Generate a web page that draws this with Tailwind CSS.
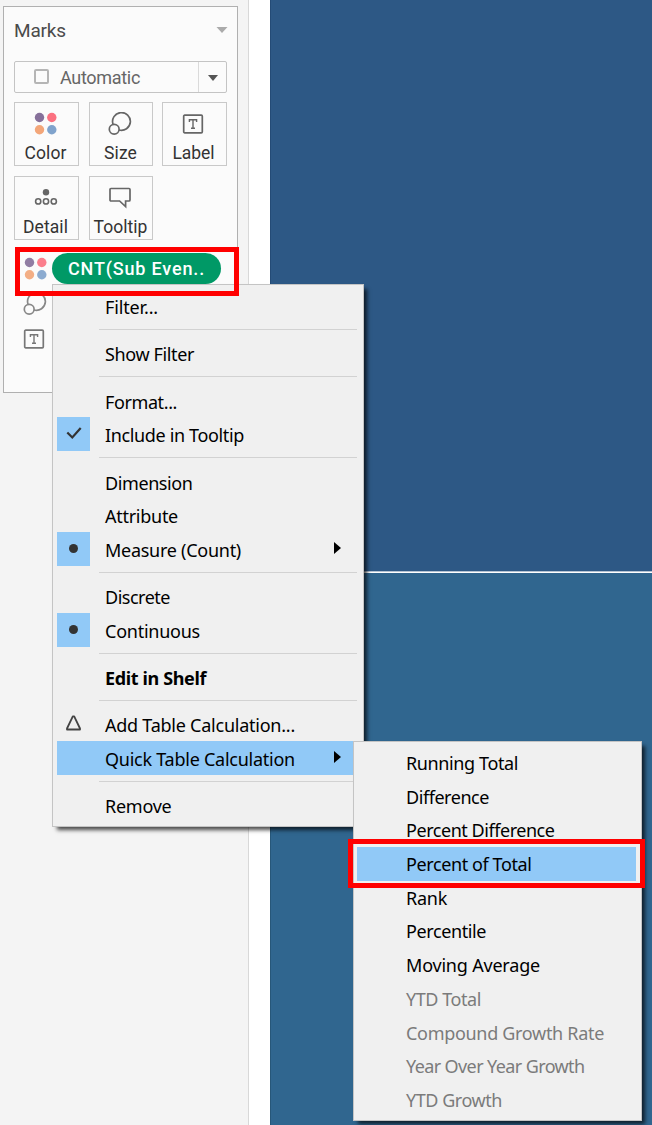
<!DOCTYPE html>
<html lang="en">
<head>
<meta charset="utf-8">
<title>Marks card</title>
<script src="https://cdn.jsdelivr.net/npm/@tailwindcss/browser@4"></script>
</head>
<body class="relative h-[1125px] w-[652px] overflow-hidden bg-white font-['Noto_Sans',sans-serif]">
<svg class="hidden">
  <symbol id="dots" viewBox="0 0 24 24"><circle cx="5.5" cy="5.5" r="4.7" fill="#86709a"/><circle cx="17.8" cy="5.5" r="4.7" fill="#fb7180"/><circle cx="5.5" cy="17.8" r="4.7" fill="#f3a679"/><circle cx="17.8" cy="17.8" r="4.7" fill="#80a3cc"/></symbol>
  <symbol id="size" viewBox="0 0 24 24"><path d="M5 12.2A8.9 8.9 0 1 1 11 18" fill="none" stroke="currentColor" stroke-width="1.700"/><circle cx="6.200" cy="17.2" r="4.900" fill="none" stroke="currentColor" stroke-width="1.700"/></symbol>
  <symbol id="label" viewBox="0 0 22 20"><rect x="1.7" y="1.2" width="18.6" height="17.600" rx="1" fill="none" stroke="currentColor" stroke-width="1.7"/><path d="M7.400 8V5.800H14.600V8M11 5.800V14M9 14.200H13" fill="none" stroke="currentColor" stroke-width="1.4"/></symbol>
</svg>

<main class="flex h-full">
  <aside class="h-full w-[249px] shrink-0 border-r border-[#d8d8d8] bg-[#f4f4f4] pt-1.5 pl-[3px] font-[Roboto,sans-serif] text-[#4b4b4b]">
    <section class="h-[387px] w-[235px] border border-[#b0b0b0] bg-[#fbfbfb] px-[10px]">
      <header class="flex h-[47px] items-center justify-between">
        <h1 class="text-[19px] leading-6 whitespace-nowrap"><span data-w="52">Marks</span></h1>
        <svg class="mb-0.5 -mr-px h-1.5 w-3" viewBox="0 0 12 6"><path d="M.5 0h11L6 6z" fill="#ababab"/></svg>
      </header>
      <div class="mt-[7px] flex h-8 w-[213px] items-stretch rounded-[2px] border border-[#c4c4c4]">
        <div class="flex flex-1 items-center pl-[19px]">
          <span class="mb-px size-[15px] rounded-[2px] border-2 border-[#b5b5b5]"></span>
          <span class="mt-0.5 ml-[11px] text-[18px] leading-6 whitespace-nowrap text-[#666]"><span data-w="80">Automatic</span></span>
        </div>
        <div class="flex w-7 items-center justify-center border-l border-[#dadada]"><svg class="mt-0.5 h-1.5 w-2.5" viewBox="0 0 10 6"><path d="M0 0h10L5 6z" fill="#555"/></svg></div>
      </div>
      <div class="mt-[9px] grid grid-cols-[65px_64px_65px] gap-x-[9.5px] gap-y-[10px] text-center text-[17.500px] leading-5 text-[#333]">
        <div class="flex h-16 flex-col items-center border border-[#c9c9c9] pt-[9px]"><svg class="h-6 w-6 -ml-px text-[#666]"><use href="#dots"/></svg><span class="mt-[7px] -ml-0.5 whitespace-nowrap" data-w="42">Color</span></div>
        <div class="flex h-16 flex-col items-center border border-[#c9c9c9] pt-[9px]"><svg class="h-6 w-6 -ml-px text-[#666]"><use href="#size"/></svg><span class="mt-[7px] whitespace-nowrap" data-w="33">Size</span></div>
        <div class="flex h-16 flex-col items-center border border-[#c9c9c9] pt-[11px]"><svg class="-ml-[3px] h-5 w-[22px] text-[#666]"><use href="#label"/></svg><span class="mt-[9px] -ml-0.5 whitespace-nowrap" data-w="42">Label</span></div>
        <div class="flex h-16 flex-col items-center border border-[#c9c9c9] pt-[9px]"><svg class="h-6 w-6 -ml-px text-[#666]" viewBox="0 0 24 24"><circle cx="12" cy="6.2" r="3.2" fill="currentColor"/><g fill="none" stroke="currentColor" stroke-width="1.6"><circle cx="4.2" cy="15.4" r="2.6"/><circle cx="12" cy="15.4" r="2.6"/><circle cx="19.8" cy="15.4" r="2.6"/></g></svg><span class="mt-[7px] -ml-0.5 whitespace-nowrap" data-w="45">Detail</span></div>
        <div class="flex h-16 flex-col items-center border border-[#c9c9c9] pt-[9px]"><svg class="h-6 w-6 -ml-px text-[#666]" viewBox="0 0 24 24"><path d="M3 2.5h18a1 1 0 0 1 1 1v10.500a1 1 0 0 1-1 1h-3.400v5.600l-6-5.600H3a1 1 0 0 1-1-1v-10.500a1 1 0 0 1 1-1z" fill="none" stroke="currentColor" stroke-width="1.7"/></svg><span class="mt-[7px] whitespace-nowrap" data-w="54">Tooltip</span></div>
      </div>
      <div class="mt-[13px] flex h-[31px] items-center pl-[10px]">
        <svg class="size-6 shrink-0 opacity-90"><use href="#dots"/></svg>
        <div class="ml-[4px] flex h-[31px] w-[169px] shrink-0 items-center rounded-full bg-[#009966] pl-4 text-[18px] font-medium whitespace-nowrap text-white"><span data-w="137">CNT(Sub Even..</span></div>
      </div>
      <svg class="mt-[8px] ml-[9px] size-6 text-[#888]"><use href="#size"/></svg>
      <svg class="mt-[13px] ml-[9px] h-5 w-[22px] text-[#777]"><use href="#label"/></svg>
    </section>
  </aside>
  <div class="ml-[21px] flex flex-1 flex-col">
    <div class="h-[571px] border-l border-[#244b76] bg-[#2d5885]"></div>
    <div class="h-px bg-[#b4c3d3]"></div>
    <div class="mt-px flex-1 border-l border-[#275779] bg-[#30668f]"></div>
  </div>
</main>

<!-- Context menu -->
<nav class="absolute top-[284px] left-[52px] h-[543px] w-[312px] border border-[#c4c4c4] bg-[#f0f0f0] px-1 pt-[4px] text-[18px] leading-[36px] whitespace-nowrap text-black shadow-[4px_4px_4px_-1px_rgba(0,0,0,0.7)]">
  <div class="flex h-[33.700px] pl-[48px]"><span data-w="53">Filter...</span></div>
  <hr class="mt-[6.300px] mr-0.5 mb-[6.300px] ml-[42px] border-t border-[#d2d2d2]">
  <div class="flex h-[33.700px] pl-[48px]"><span data-w="89">Show Filter</span></div>
  <hr class="mt-[6.300px] mr-0.5 mb-[6.300px] ml-[42px] border-t border-[#d2d2d2]">
  <div class="flex h-[33.700px] pl-[48px]"><span data-w="72">Format...</span></div>
  <div class="flex h-[33.700px]"><span class="mr-[15px] flex h-full w-[33px] items-center justify-center bg-[#91c9f7]"><svg class="mb-0.5 h-3.5 w-4" viewBox="0 0 16 14"><path d="M1.300 6.500l5 5L14.700 2" fill="none" stroke="#333" stroke-width="2.200"/></svg></span><span data-w="139">Include in Tooltip</span></div>
  <hr class="mt-[6.300px] mr-0.5 mb-[6.300px] ml-[42px] border-t border-[#d2d2d2]">
  <div class="flex h-[33.700px] pl-[48px]"><span data-w="87.5">Dimension</span></div>
  <div class="flex h-[33.700px] pl-[48px]"><span data-w="73">Attribute</span></div>
  <div class="flex h-[33.700px]"><span class="mr-[15px] flex h-full w-[33px] items-center justify-center bg-[#91c9f7]"><span class="size-[9px] rounded-full bg-[#333]"></span></span><span data-w="136">Measure (Count)</span><svg class="mt-[10px] mr-[18px] ml-auto h-3 w-[7px]" viewBox="0 0 7 12"><path d="M0 0v12l7-6z"/></svg></div>
  <hr class="mt-[6.300px] mr-0.5 mb-[6.300px] ml-[42px] border-t border-[#d2d2d2]">
  <div class="flex h-[33.700px] pl-[48px]"><span data-w="65">Discrete</span></div>
  <div class="flex h-[33.700px]"><span class="mr-[15px] flex h-full w-[33px] items-center justify-center bg-[#91c9f7]"><span class="size-[9px] rounded-full bg-[#333]"></span></span><span data-w="95">Continuous</span></div>
  <hr class="mt-[6.300px] mr-0.5 mb-[6.300px] ml-[42px] border-t border-[#d2d2d2]">
  <div class="flex h-[33.700px] pl-[48px] font-bold"><span data-w="101">Edit in Shelf</span></div>
  <hr class="mt-[6.300px] mr-0.5 mb-[6.300px] ml-[42px] border-t border-[#d2d2d2]">
  <div class="flex h-[33.700px]"><span class="mr-[15px] flex w-[33px] justify-center"><svg class="mt-[8px] mr-px h-4 w-[15px]" viewBox="0 0 15 16"><path d="M6.800 1.400h1.400L14 13.500v1H1v-1z" fill="none" stroke="#444" stroke-width="1.800" stroke-linejoin="round"/></svg></span><span data-w="190">Add Table Calculation...</span></div>
  <div class="flex h-[33.700px] bg-[#91c9f7] pl-[48px]"><span data-w="190">Quick Table Calculation</span><svg class="mt-[10px] mr-[18px] ml-auto h-3 w-[7px]" viewBox="0 0 7 12"><path d="M0 0v12l7-6z"/></svg></div>
  <hr class="mt-[6.300px] mr-0.5 mb-[6.300px] ml-[42px] border-t border-[#d2d2d2]">
  <div class="flex h-[33.700px] pl-[48px]"><span data-w="66.5">Remove</span></div>
</nav>

<!-- Quick Table Calculation submenu -->
<nav class="absolute top-[741px] left-[353px] h-[380px] w-[289px] border border-[#c4c4c4] bg-[#f0f0f0] px-[3px] pt-[4px] text-[18px] leading-[35px] whitespace-nowrap text-black shadow-[4px_4px_4px_-1px_rgba(0,0,0,0.7)]">
  <div class="flex h-[33.700px] pl-[49px]"><span data-w="112">Running Total</span></div>
  <div class="flex h-[33.700px] pl-[49px]"><span data-w="83">Difference</span></div>
  <div class="flex h-[33.700px] pl-[49px]"><span data-w="148.5">Percent Difference</span></div>
  <div class="mr-0.5 flex h-[33.700px] bg-[#91c9f7] pl-[49px]"><span data-w="125.5">Percent of Total</span></div>
  <div class="flex h-[33.700px] pl-[49px]"><span data-w="41">Rank</span></div>
  <div class="flex h-[33.700px] pl-[49px]"><span data-w="80">Percentile</span></div>
  <div class="flex h-[33.700px] pl-[49px]"><span data-w="134">Moving Average</span></div>
  <div class="text-[#7b7b7b]">
    <div class="flex h-[33.700px] pl-[49px]"><span data-w="75">YTD Total</span></div>
    <div class="flex h-[33.700px] pl-[49px]"><span data-w="198">Compound Growth Rate</span></div>
    <div class="flex h-[33.700px] pl-[49px]"><span data-w="178.5">Year Over Year Growth</span></div>
    <div class="flex h-[33.700px] pl-[49px]"><span data-w="96">YTD Growth</span></div>
  </div>
</nav>

<!-- Callouts -->
<div class="absolute top-[247px] left-[15px] h-[49px] w-[224px] border-5 border-[#ff0000]"></div>
<div class="absolute top-[839px] left-[348px] h-[49px] w-[297px] border-5 border-[#ff0000]"></div>

<script>
  function fitLabels() {
    document.querySelectorAll('[data-w]').forEach(el => {
      el.style.letterSpacing = '0px';
      const range = document.createRange();
      range.selectNodeContents(el);
      const w = range.getBoundingClientRect().width;
      el.style.letterSpacing = ((el.dataset.w - w) / el.textContent.length) + 'px';
    });
  }
  addEventListener('load', () => { fitLabels(); document.fonts.ready.then(fitLabels); });
</script>
</body>
</html>
